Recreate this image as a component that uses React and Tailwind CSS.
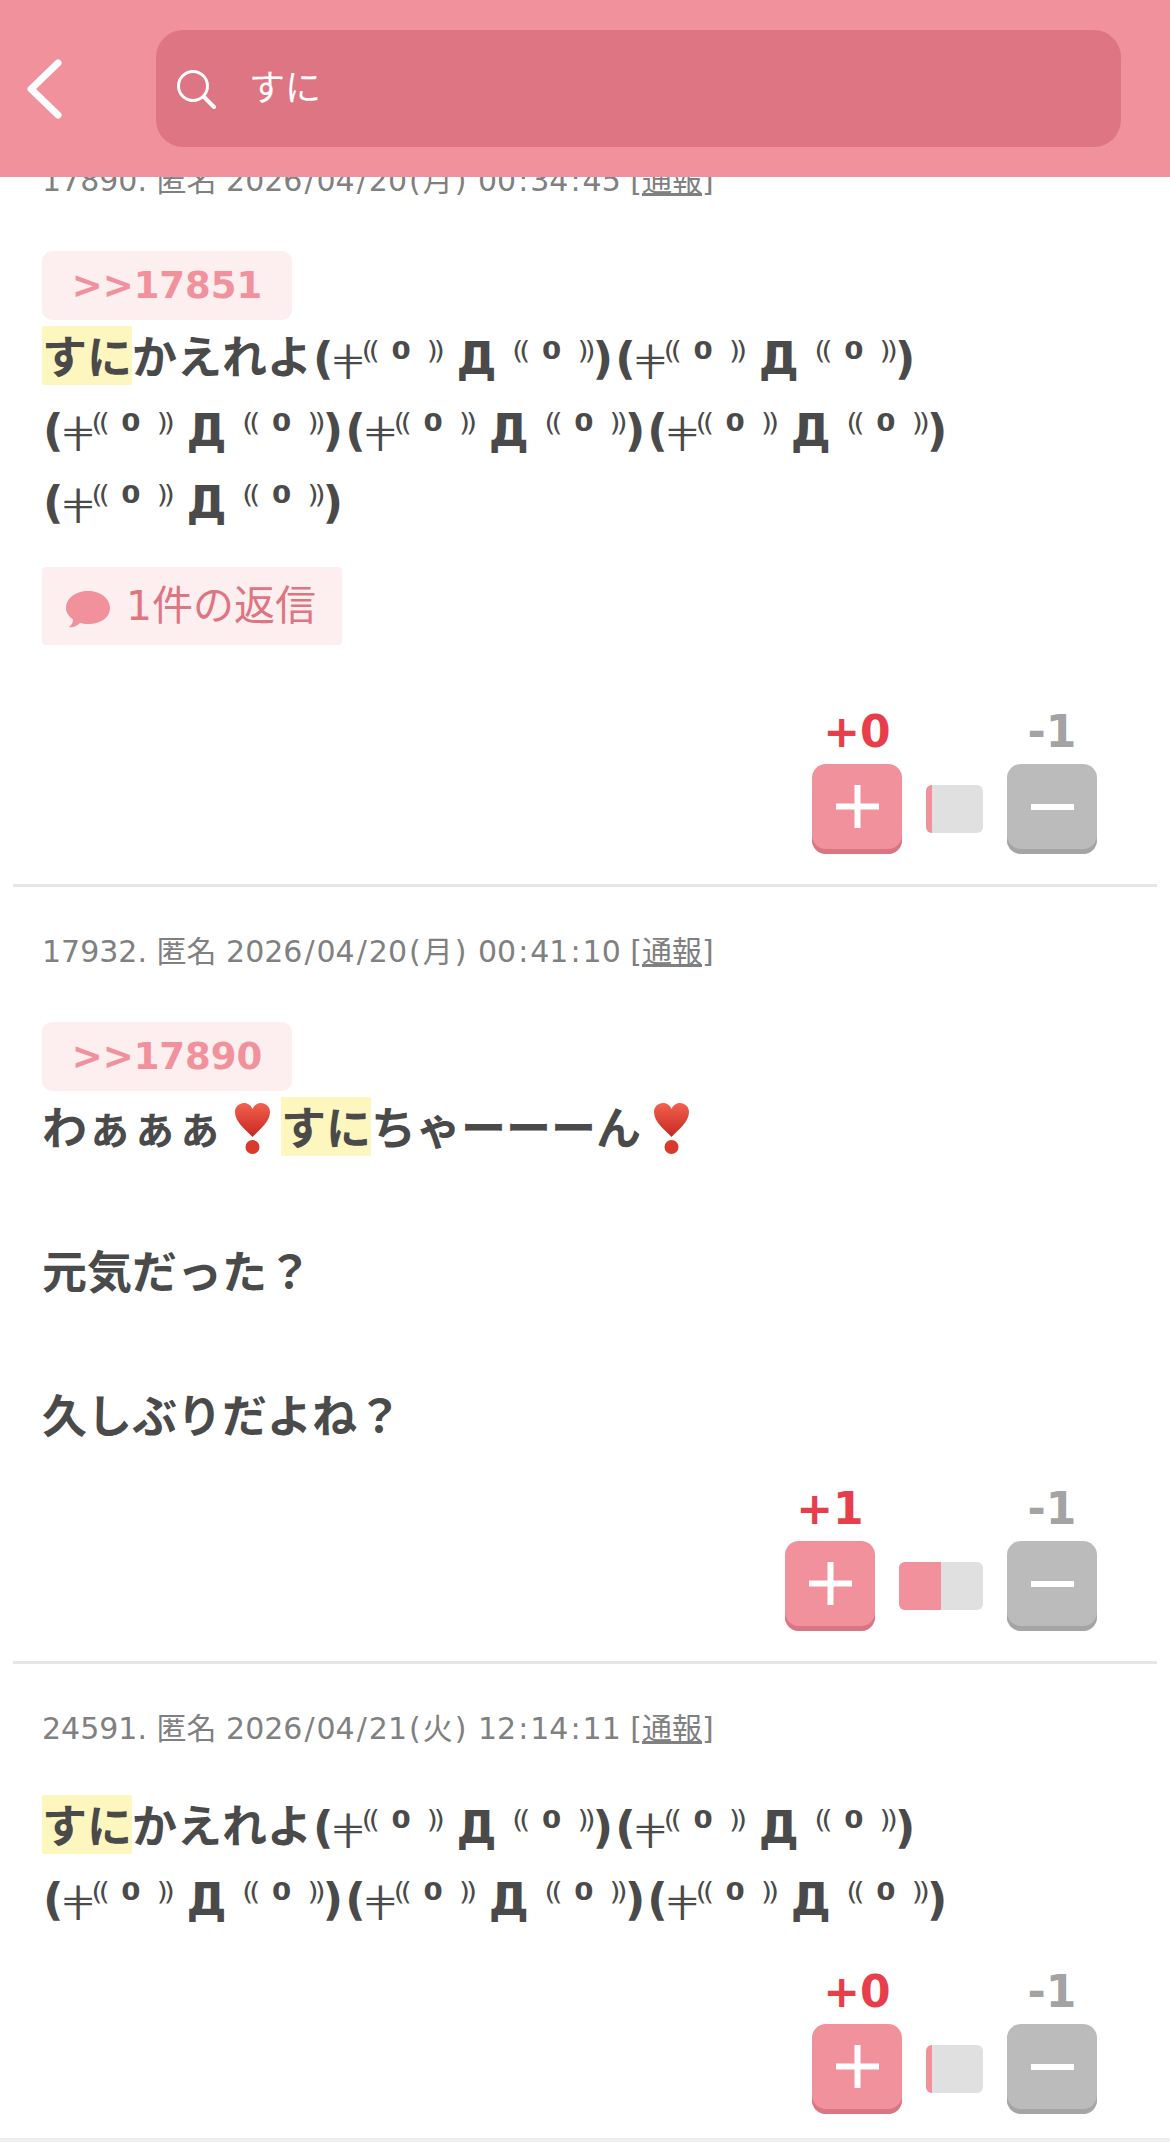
function Face() {
  const thin = "font-normal tracking-[-4px]";
  return (
    <span>
      <span className="px-px">(</span><span className="inline-block scale-y-[0.68] leading-[40px] font-['Liberation_Mono'] font-normal">╪</span>
      <span className={thin}>⁽⁽</span> ⁰ <span className={thin}>⁾⁾</span> Д <span className={thin}>⁽⁽</span> ⁰ <span className={thin}>⁾⁾</span><span className="px-px">)</span>
    </span>
  );
}

function Mark({ children }) {
  return <span className="bg-[#fdf6bf] rounded-[2px] pt-[6px]">{children}</span>;
}

function SparkHeart() {
  return (
    <svg viewBox="0 0 59 56" className="inline-block w-[59px] h-[56px] align-[-12px]">
      <defs>
        <linearGradient id="heart" x1="0" y1="0" x2="0" y2="1">
          <stop offset="0" stopColor="#f2614f" />
          <stop offset="1" stopColor="#c6281f" />
        </linearGradient>
      </defs>
      <path d="M30.500 36 C24 29 13 21 13 11 C13 5.500 17.500 2 22 2 C26 2 29 4.500 30.500 8 C32 4.500 35 2 39 2 C43.500 2 48 5.500 48 11 C48 21 37 29 30.500 36 Z" fill="url(#heart)" />
      <circle cx="30.500" cy="46" r="7" fill="#d93a2c" />
    </svg>
  );
}

function Votes({ up, down, track, fill }) {
  return (
    <div className="flex justify-end items-end pr-[60px]">
      <div className="flex flex-col items-center">
        <span className="text-[44px] leading-[48px] font-bold text-[#e63e4b] mb-2">{up}</span>
        <button className="w-[90px] h-[90px] pb-[5px] rounded-[14px] bg-[#f0919c] shadow-[inset_0_-5px_0_#d97682] flex items-center justify-center">
          <svg viewBox="0 0 43 43" className="w-[43px] h-[43px]">
            <path d="M0 21.500H43M21.500 0V43" stroke="#fff" strokeWidth="6" />
          </svg>
        </button>
      </div>
      <div className="h-[48px] mx-6 mb-[21px] rounded-[6px] overflow-hidden bg-[#e0e0e0]" style={{ width: track }}>
        <div className="h-full bg-[#f0919c]" style={{ width: fill }} />
      </div>
      <div className="flex flex-col items-center">
        <span className="text-[44px] leading-[48px] font-bold text-[#a3a3a3] mb-2">{down}</span>
        <button className="w-[90px] h-[90px] pb-[5px] rounded-[14px] bg-[#bbbbbb] shadow-[inset_0_-5px_0_#a5a5a5] flex items-center justify-center">
          <svg viewBox="0 0 43 6" className="w-[43px] h-[6px]">
            <path d="M0 3H43" stroke="#fff" strokeWidth="6" />
          </svg>
        </button>
      </div>
    </div>
  );
}

function Post({ meta, chip, children, reply, votes, gap, last }) {
  return (
    <div className={last ? "pt-[45px] pb-6" : "border-b-[3px] border-[#e6e6e6] pt-[45px] pb-[30px]"}>
      <p className="pl-[29px] text-[30px] leading-[40px] text-[#808080]">
        {meta.split(/([/:()])/).map((part, i) =>
          i % 2 ? <span key={i} className="px-[2px]">{part}</span> : part
        )}{' '}
        [<span className="underline">通報</span>]
      </p>
      <div className={chip ? "pl-[29px] mt-[50px]" : "pl-[29px] mt-[43px]"}>
        {chip && (
          <div className="mb-[3px] w-[250px] h-[69px] rounded-[10px] bg-[#fdeef0] flex items-center justify-center text-[37px] font-bold text-[#f0919c]">
            {chip}
          </div>
        )}
        <div className="text-[45px] leading-[72px] font-bold text-[#4a4a4a] whitespace-nowrap">{children}</div>
        {reply && (
          <div className="mt-[28px] w-[300px] h-[78px] pt-[2px] rounded-[4px] bg-[#fdeef0] flex items-center pl-6 gap-4 text-[41px] text-[#de7582]">
            <svg viewBox="0 0 44 37" className="w-[44px] h-[37px] mt-1">
              <path d="M22 0C34 0 44 7 44 17C44 27 34 33 22 33C19 33 16 32.500 14 32C11 35 7 37 3 36C6 34 7 31 7 28.500C3 25.500 0 22 0 17C0 7 10 0 22 0Z" fill="#f0919c" />
            </svg>
            {reply}
          </div>
        )}
      </div>
      <div style={{ marginTop: gap }}>
        <Votes {...votes} />
      </div>
    </div>
  );
}

export default function App() {
  return (
    <div className="w-[1170px] h-[2142px] overflow-hidden bg-white font-['DejaVu_Sans','Noto_Sans_CJK_JP',sans-serif]">
      <header className="relative z-10 h-[177px] bg-[#f0919c] flex items-center">
        <svg viewBox="0 0 40 60" className="w-[40px] h-[60px] ml-[25px] shrink-0">
          <path d="M33 4L6 30L33 56" fill="none" stroke="#fff" strokeWidth="7" strokeLinecap="round" strokeLinejoin="round" />
        </svg>
        <div className="ml-[91px] mr-[49px] flex-1 h-[117px] rounded-[27px] bg-[#de7582] flex items-center pl-5">
          <svg viewBox="0 0 40 40" className="w-[40px] h-[40px]">
            <circle cx="17" cy="17" r="14.500" fill="none" stroke="#fff" strokeWidth="3" />
            <path d="M28 28L38 38" stroke="#fff" strokeWidth="4" strokeLinecap="round" />
          </svg>
          <span className="ml-[33px] text-[36px] text-white">すに</span>
        </div>
      </header>
      <main className="-mt-[61px] mx-[13px]">
        <Post
          meta="17890. 匿名 2026/04/20(月) 00:34:45"
          chip=">>17851"
          reply="1件の返信"
          gap={63}
          votes={{ up: '+0', down: '-1', track: 57, fill: 6 }}
        >
          <Mark>すに</Mark>かえれよ<Face /><Face />
          <br />
          <Face /><Face /><Face />
          <br />
          <Face />
        </Post>
        <Post
          meta="17932. 匿名 2026/04/20(月) 00:41:10"
          chip=">>17890"
          gap={31}
          votes={{ up: '+1', down: '-1', track: 84, fill: 42 }}
        >
          わぁぁぁ<SparkHeart /><Mark>すに</Mark>ちゃーーーん<SparkHeart />
          <br />
          <br />
          元気だった？
          <br />
          <br />
          久しぶりだよね？
        </Post>
        <Post
          last
          meta="24591. 匿名 2026/04/21(火) 12:14:11"
          gap={32}
          votes={{ up: '+0', down: '-1', track: 57, fill: 6 }}
        >
          <Mark>すに</Mark>かえれよ<Face /><Face />
          <br />
          <Face /><Face /><Face />
        </Post>
      </main>
      <div className="h-1 bg-[#eeeeee]" />
    </div>
  );
}
